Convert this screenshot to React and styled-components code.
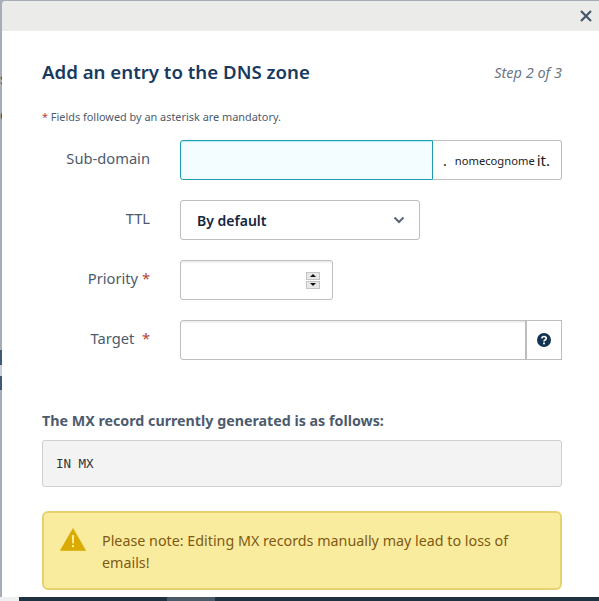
import React from 'react';
import styled, { createGlobalStyle } from 'styled-components';

const sans = '"Noto Sans", "Open Sans", sans-serif';
const navy = '#133352';
const slate = '#4d5b6e';
const line = '#bdbdbd';

const Global = createGlobalStyle`
  html, body { margin: 0; padding: 0; height: 100%; overflow: hidden; }
  body { background: #a7adb6; font-family: ${sans}; }
  * { box-sizing: border-box; }
`;

const Page = styled.div`
  width: 599px;
  height: 601px;
  position: relative;
  overflow: hidden;
  padding-top: 1px;
  display: flex;
  flex-direction: column;
`;

const BackdropText = styled.span`
  position: absolute;
  left: 0;
  top: ${(p) => p.$top}px;
  font-size: 14px;
  line-height: 14px;
  color: #4a5058;
`;

const BackdropBlock = styled.div`
  position: absolute;
  left: 0;
  top: 350px;
  width: 2px;
  height: 40px;
  background: linear-gradient(#3f5a78 0 15px, #c9cfd6 15px 26px, #3f5a78 26px);
`;

const Modal = styled.div`
  width: 597px;
  height: 596px;
  margin-left: 2px;
  background: #fff;
  border-top-left-radius: 4px;
  display: flex;
  flex-direction: column;
  position: relative;
  z-index: 1;
`;

const TopBar = styled.div`
  height: 30px;
  background: #ebecea;
  display: flex;
  align-items: center;
  justify-content: flex-end;
  padding-right: 7px;
  border-top-left-radius: 4px;
`;

const Close = styled.button`
  border: 0;
  padding: 0;
  background: none;
  width: 12px;
  height: 12px;
  display: flex;
  color: #45566a;
`;

const Body = styled.div`
  padding: 0 37px 0 40px;
  display: flex;
  flex-direction: column;
`;

const Header = styled.div`
  display: flex;
  justify-content: space-between;
  align-items: center;
  margin-top: 27px;
  height: 28px;
`;

const Title = styled.h2`
  margin: 0;
  font-size: 18.65px;
  font-weight: 600;
  color: #173a5e;
  line-height: 28px;
`;

const Step = styled.span`
  font-size: 14.5px;
  font-style: italic;
  color: #6a7685;
`;

const Legend = styled.p`
  margin: 23px 0 0;
  font-size: 10.9px;
  line-height: 16px;
  color: ${slate};
`;

const Star = styled.span`
  color: #b8433a;
`;

const Rows = styled.div`
  margin-top: 15px;
  display: flex;
  flex-direction: column;
  gap: 20px;
`;

const Row = styled.div`
  display: flex;
  height: 40px;
`;

const Label = styled.label`
  width: 108px;
  margin-right: 30px;
  text-align: right;
  font-size: 14.7px;
  line-height: 36px;
  color: ${slate};
  white-space: pre;
`;

const Input = styled.div`
  height: 40px;
  width: ${(p) => p.$w}px;
  background: #fff;
  border: 1px solid ${line};
  border-radius: 3px;
  box-shadow: inset 0 2px 0 #f0f0f0;
`;

const FocusInput = styled(Input)`
  background: #f3fcfe;
  border-color: #1f9bb0;
  border-radius: 3px 0 0 3px;
  box-shadow: inset 0 1px 1px #b8eef5;
`;

const Suffix = styled.div`
  width: 129px;
  height: 40px;
  border: 1px solid ${line};
  border-left: 0;
  border-radius: 0 3px 3px 0;
  display: flex;
  align-items: center;
  padding-left: 10px;
  color: #222;
`;

const Dot = styled.span`
  font-size: 14px;
  margin-right: 8px;
`;

const Domain = styled.span`
  font-size: 11.2px;
`;

const Tld = styled.span`
  font-size: 15px;
  margin-left: 2px;
`;

const Select = styled.div`
  width: 240px;
  height: 40px;
  border: 1px solid ${line};
  border-radius: 3px;
  display: flex;
  align-items: center;
  justify-content: space-between;
  padding: 0 14px 0 16px;
  font-size: 14px;
  font-weight: 600;
  color: #13263f;
`;

const NumberInput = styled(Input)`
  display: flex;
  align-items: center;
  justify-content: flex-end;
  padding-right: 12px;
`;

const Spinner = styled.div`
  width: 14px;
  height: 17px;
  display: flex;
  flex-direction: column;
  gap: 1px;
`;

const SpinButton = styled.div`
  flex: 1;
  background: #e8e8e8;
  border: 1px solid #c4c4c4;
  display: flex;
  align-items: center;
  justify-content: center;
`;

const Arrow = styled.span`
  width: 0;
  height: 0;
  border-left: 3px solid transparent;
  border-right: 3px solid transparent;
  ${(p) => (p.$down ? 'border-top: 3px solid #111;' : 'border-bottom: 3px solid #111;')}
`;

const TargetInput = styled(Input)`
  border-radius: 3px 0 0 3px;
  width: 346px;
`;

const HelpButton = styled.div`
  width: 37px;
  height: 40px;
  border: 1px solid ${line};
  border-left-width: 2px;
  margin-left: -1px;
  display: flex;
  align-items: center;
  justify-content: center;
`;

const RecordTitle = styled.h4`
  margin: 51px 0 0;
  font-size: 14.25px;
  line-height: 20px;
  font-weight: 700;
  color: ${slate};
`;

const Record = styled.pre`
  margin: 9px 0 0;
  height: 47px;
  padding: 0 13px;
  background: #f3f3f3;
  border: 1px solid #cfcfcf;
  border-radius: 3px;
  font-family: "DejaVu Sans Mono", monospace;
  font-size: 12.5px;
  line-height: 46px;
  color: #333;
`;

const Alert = styled.div`
  margin-top: 24px;
  height: 79px;
  background: #faec9f;
  border: 2px solid #e5d26f;
  border-radius: 6px;
  display: flex;
  align-items: center;
  padding-left: 16px;
`;

const AlertIcon = styled.svg`
  align-self: flex-start;
  flex: none;
  margin-top: 15px;
`;

const AlertText = styled.p`
  margin: 2px 0 0 16px;
  width: 450px;
  font-size: 14.3px;
  line-height: 22px;
  color: #7f5a12;
`;

const Footer = styled.div`
  height: 4px;
  background: #1f323f;
  display: flex;
`;

const FooterLeft = styled.div`
  width: 19px;
  background: #eef0f2;
`;

const FooterTab = styled.div`
  margin-left: 148px;
  width: 48px;
  background: #4a5a66;
`;

export default function App() {
  return (
    <Page>
      <Global />
      <BackdropText $top={72}>s</BackdropText>
      <BackdropText $top={108}>o</BackdropText>
      <BackdropBlock />
      <Modal>
        <TopBar>
          <Close aria-label="Close">
            <svg width="12" height="12" viewBox="0 0 12 12" fill="none" stroke="currentColor" strokeWidth="2.2">
              <path d="M1 1l10 10M11 1L1 11" />
            </svg>
          </Close>
        </TopBar>
        <Body>
          <Header>
            <Title>Add an entry to the DNS zone</Title>
            <Step>Step 2 of 3</Step>
          </Header>
          <Legend>
            <Star>*</Star> Fields followed by an asterisk are mandatory.
          </Legend>
          <Rows>
            <Row>
              <Label>Sub-domain</Label>
              <FocusInput $w={253} />
              <Suffix>
                <Dot>.</Dot>
                <Domain>nomecognome</Domain>
                <Tld>it.</Tld>
              </Suffix>
            </Row>
            <Row>
              <Label>TTL</Label>
              <Select>
                By default
                <svg width="12" height="8" viewBox="0 0 12 8" fill="none" stroke="#5b6675" strokeWidth="2">
                  <path d="M1.5 1.5L6 6l4.5-4.5" />
                </svg>
              </Select>
            </Row>
            <Row>
              <Label>
                Priority <Star>*</Star>
              </Label>
              <NumberInput $w={153}>
                <Spinner>
                  <SpinButton><Arrow /></SpinButton>
                  <SpinButton><Arrow $down /></SpinButton>
                </Spinner>
              </NumberInput>
            </Row>
            <Row>
              <Label>
                Target  <Star>*</Star>
              </Label>
              <TargetInput />
              <HelpButton>
                <svg width="14" height="14" viewBox="0 0 14 14">
                  <circle cx="7" cy="7" r="7" fill={navy} />
                  <path d="M4.8 5.4C4.9 4.2 5.8 3.5 7 3.5c1.3 0 2.2.8 2.2 1.9 0 1.7-2.2 1.6-2.2 3" fill="none" stroke="#fff" strokeWidth="1.7" />
                  <rect x="6.1" y="9.5" width="1.8" height="1.8" fill="#fff" />
                </svg>
              </HelpButton>
            </Row>
          </Rows>
          <RecordTitle>The MX record currently generated is as follows:</RecordTitle>
          <Record>IN MX</Record>
          <Alert>
            <AlertIcon width="26" height="23" viewBox="0 0 26 23">
              <path d="M13 .5L25.7 22.5H.3z" fill="#d9ab00" stroke="#d9ab00" strokeWidth="0.6" strokeLinejoin="round" />
              <path d="M11.8 7h2.4l-.4 8.5h-1.6z" fill="#faec9f" />
              <rect x="12" y="17" width="2" height="2.2" fill="#faec9f" />
            </AlertIcon>
            <AlertText>Please note: Editing MX records manually may lead to loss of emails!</AlertText>
          </Alert>
        </Body>
      </Modal>
      <Footer>
        <FooterLeft />
        <FooterTab />
      </Footer>
    </Page>
  );
}
